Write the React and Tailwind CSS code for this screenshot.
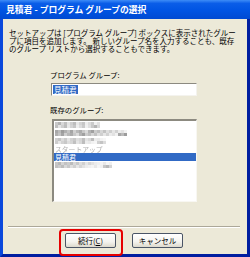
import React from "react";

const mosaicRows = [
  ["bg-[#c8c8c8]", "bg-[#b4b4b4]", "bg-[#d8d8d8]", "bg-[#c0c0c0]", "bg-[#e4e4e4]", "bg-[#cfcfcf]", "bg-[#bdbdbd]", "bg-[#e8e8e8]", "bg-[#d4d4d4]", "bg-[#c6c6c6]", "bg-[#eeeeee]", "bg-[#dcdcdc]", "bg-[#cacaca]", "bg-[#f0f0f0]", "bg-[#e0e0e0]"],
  ["bg-[#a8a8a8]", "bg-[#bcbcbc]", "bg-[#9c9c9c]", "bg-[#b0b0b0]", "bg-[#c4c4c4]", "bg-[#a4a4a4]", "bg-[#d0d0d0]", "bg-[#b8b8b8]", "bg-[#acacac]", "bg-[#c8c8c8]", "bg-[#dadada]", "bg-[#b4b4b4]", "bg-[#a0a0a0]", "bg-[#cccccc]", "bg-[#bebebe]", "bg-[#d6d6d6]", "bg-[#c2c2c2]", "bg-[#dedede]", "bg-[#cfcfcf]", "bg-[#e6e6e6]", "bg-[#d2d2d2]", "bg-[#ececec]", "bg-[#e2e2e2]", "bg-[#f2f2f2]"],
  ["bg-[#d0d0d0]", "bg-[#c4c4c4]", "bg-[#dcdcdc]", "bg-[#cccccc]", "bg-[#e6e6e6]", "bg-[#d2d2d2]", "bg-[#c8c8c8]", "bg-[#dedede]", "bg-[#d6d6d6]", "bg-[#c0c0c0]", "bg-[#e4e4e4]", "bg-[#d8d8d8]", "bg-[#bdbdbd]", "bg-[#ececec]", "bg-[#e8e8e8]", "bg-[#f2f2f2]", "bg-[#f6f6f6]"],
];
const lastRow = ["bg-[#c6c6c6]", "bg-[#b8b8b8]", "bg-[#d4d4d4]", "bg-[#c2c2c2]", "bg-[#cccccc]", "bg-[#bcbcbc]", "bg-[#d8d8d8]", "bg-[#c8c8c8]", "bg-[#dedede]", "bg-[#d0d0d0]", "bg-[#e6e6e6]", "bg-[#d6d6d6]", "bg-[#e2e2e2]", "bg-[#ececec]", "bg-[#f0f0f0]", "bg-[#f4f4f4]", "bg-[#e8e8e8]", "bg-[#f6f6f6]", "bg-[#f0f0f0]"];

function Mosaic({ shades }) {
  return (
    <div className="flex h-[8px] pl-[1px] items-center">
      <div className="flex flex-col">
        <div className="flex">
          {shades.map((c, i) => (
            <span key={i} className={`block w-[3px] h-[3px] ${c}`} />
          ))}
        </div>
        <div className="flex">
          {shades.map((c, i) => (
            <span key={i} className={`block w-[3px] h-[3px] ${shades[(i + 3) % shades.length]}`} />
          ))}
        </div>
      </div>
    </div>
  );
}

function XpButton({ children }) {
  return (
    <button className="w-[51px] h-[15px] rounded-[2px] border border-[#4a5566] bg-[linear-gradient(to_bottom,#ffffff_0%,#f4f3ee_60%,#dcd9cc_100%)] text-[7.5px] leading-[13px] text-black flex items-center justify-center">
      {children}
    </button>
  );
}

export default function App() {
  return (
    <div className="relative w-[250px] h-[257px] flex flex-col font-['Noto_Sans_CJK_JP','Liberation_Sans',sans-serif] text-black overflow-hidden">
      <div className="h-[19px] shrink-0 flex items-center pl-[6px] bg-[linear-gradient(to_bottom,#3d8cf7_0%,#0a5de8_18%,#0054e3_55%,#004ad2_100%)]">
        <span className="text-white font-bold text-[8.8px] leading-[11px] whitespace-nowrap">
          見積君 - プログラム グループの選択
        </span>
      </div>
      <div className="flex-1 bg-[#ece9d8] border-l-[3px] border-r-[3px] border-b-[3px] border-l-[#0a48dc] border-r-[#001ea0] border-b-[#001ea0] flex flex-col">
        <div className="pt-[10px] pl-[6px] text-[7.5px] leading-[8px] whitespace-nowrap">
          <div>セットアップは [プログラム グループ] ボックスに表示されたグルー</div>
          <div>プに項目を追加します。 新しいグループ名を入力することも、既存</div>
          <div>のグループ リストから選択することもできます。</div>
        </div>

        <div className="mt-[18px] ml-[47px] h-[8px] text-[7.4px] leading-[8px] whitespace-nowrap">
          プログラム グループ:
        </div>
        <div className="mt-[4px] ml-[48px] w-[146px] h-[13px] bg-white border border-t-[#8c8a80] border-l-[#8c8a80] border-r-[#f4f3ee] border-b-[#f4f3ee] flex items-center pl-[1px]">
          <span className="bg-[#316ac5] text-white text-[7.5px] leading-[9px] px-[1px]">見積君</span>
        </div>

        <div className="mt-[10px] ml-[47px] h-[8px] text-[7.4px] leading-[8px] whitespace-nowrap">
          既存のグループ:
        </div>
        <div className="mt-[5px] ml-[49px] w-[145px] h-[83px] bg-white border-t-2 border-l-2 border-r border-b border-t-[#8c8a80] border-l-[#8c8a80] border-r-[#f8f7f2] border-b-[#f8f7f2] flex flex-col">
          <Mosaic shades={mosaicRows[0]} />
          <Mosaic shades={mosaicRows[1]} />
          <Mosaic shades={mosaicRows[2]} />
          <div className="h-[8px] pl-[1px] text-[6.8px] leading-[8px] text-[#b0b0b0] blur-[0.6px] whitespace-nowrap overflow-hidden">
            スタートアップ
          </div>
          <div className="h-[8px] bg-[#316ac5] text-white text-[7px] leading-[8px] pl-[1px] overflow-hidden">
            見積君
          </div>
          <Mosaic shades={lastRow} />
        </div>

        <div className="mt-[24px] ml-[5px] w-[232px] h-[2px] border-t border-t-[#aca899] border-b border-b-white" />

        <div className="mt-[5px] ml-[62px] flex gap-[16px]">
          <XpButton>
            続行(<span className="underline">C</span>)
          </XpButton>
          <XpButton>キャンセル</XpButton>
        </div>
      </div>
      <div className="absolute left-[59px] top-[229px] w-[64px] h-[27px] border-2 border-[#e60000] rounded-[4px]" />
    </div>
  );
}
